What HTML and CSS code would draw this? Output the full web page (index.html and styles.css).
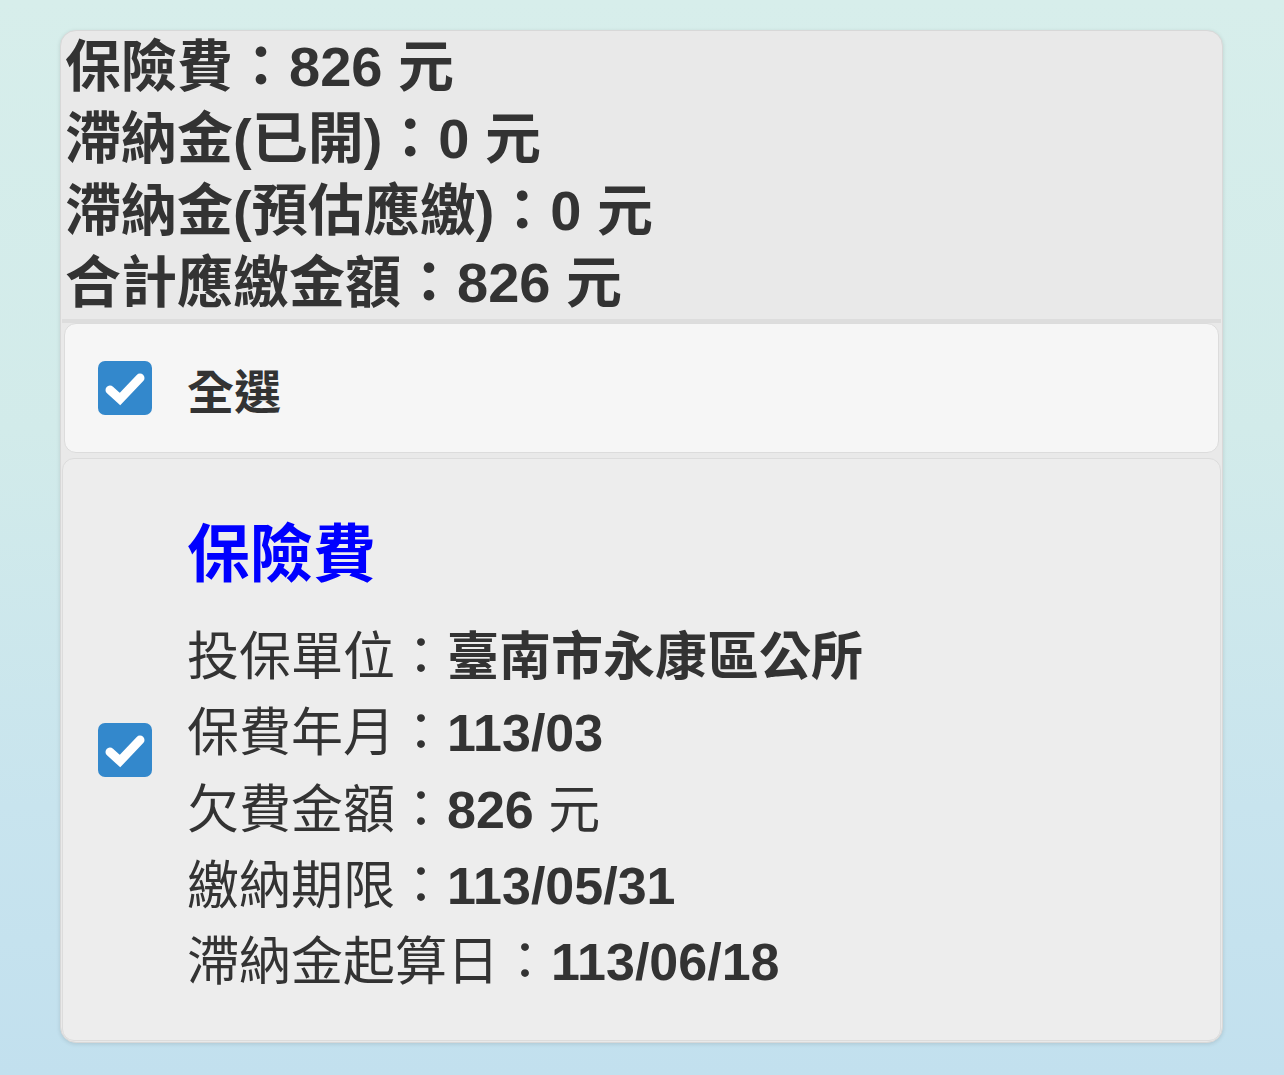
FILE: index.html
```html
<!DOCTYPE html>
<html lang="zh-Hant">
<head>
    <meta charset="UTF-8">
    <meta name="viewport" content="width=device-width, initial-scale=1.0">
    <title>保險費</title>
    <link rel="stylesheet" href="styles.css">
</head>
<body>
    <div class="page">
        <div class="card">
            <div class="summary">
                <div>保險費：826 元</div>
                <div>滯納金(已開)：0 元</div>
                <div>滯納金(預估應繳)：0 元</div>
                <div>合計應繳金額：826 元</div>
            </div>

            <label class="select-all">
                <span class="check">
                    <svg viewBox="0 0 54 54" width="54" height="54"><rect width="54" height="54" rx="7" fill="#3388cc"/><path d="M12 29 L22 38 L42 17" fill="none" stroke="#fff" stroke-width="9" stroke-linecap="round" stroke-linejoin="miter"/></svg>
                </span>
                <span class="select-text">全選</span>
            </label>

            <div class="item">
                <span class="check">
                    <svg viewBox="0 0 54 54" width="54" height="54"><rect width="54" height="54" rx="7" fill="#3388cc"/><path d="M12 29 L22 38 L42 17" fill="none" stroke="#fff" stroke-width="9" stroke-linecap="round" stroke-linejoin="miter"/></svg>
                </span>
                <div class="item-body">
                    <h2 class="item-title">保險費</h2>
                    <div class="row">投保單位：<b>臺南市永康區公所</b></div>
                    <div class="row">保費年月：<b>113/03</b></div>
                    <div class="row">欠費金額：<b>826</b> 元</div>
                    <div class="row">繳納期限：<b>113/05/31</b></div>
                    <div class="row">滯納金起算日：<b>113/06/18</b></div>
                </div>
            </div>
        </div>
    </div>
</body>
</html>
```

FILE: styles.css
```css
body {
    margin: 0;
    font-family: "Liberation Sans", "Noto Sans CJK TC", sans-serif;
    color: #333;
    background: linear-gradient(to bottom, #d7eeeb 0%, #d2ebea 40%, #c8e4ee 75%, #c2e0ee 100%);
    min-height: 1075px;
}
.page {
    padding: 30px 61px 0 60px;
}
.card {
    background: #e9e9e9;
    border: 1px solid #d8d8d8;
    border-radius: 16px;
    box-shadow: 0 1px 4px rgba(0, 0, 0, 0.12);
    padding: 0 1px 1px;
    overflow: hidden;
}
.summary {
    padding: 0 0 0 3px;
    font-size: 56px;
    font-weight: bold;
    line-height: 72px;
    border-bottom: 4px solid #dddddd;
}
.select-all {
    display: flex;
    align-items: center;
    height: 128px;
    margin: 0 2px;
    background: #f6f6f6;
    border: 1px solid #dcdcdc;
    border-radius: 12px;
}
.check {
    display: flex;
    width: 54px;
    height: 54px;
    margin-left: 33px;
}
.select-text {
    margin-left: 35px;
    font-size: 47px;
    font-weight: bold;
}
.item {
    display: flex;
    align-items: center;
    margin-top: 5px;
    background: #ededed;
    border: 1px solid #dcdcdc;
    border-radius: 12px;
}
.item .check {
    margin-left: 35px;
}
.item-body {
    margin-left: 35px;
    padding: 55px 0 40px;
}
.item-title {
    margin: 0 0 25px;
    font-size: 63px;
    line-height: 80px;
    font-weight: bold;
    color: #0000ff;
}
.row {
    font-size: 52px;
    line-height: 76.3px;
}
.row b {
    font-weight: bold;
}
```
